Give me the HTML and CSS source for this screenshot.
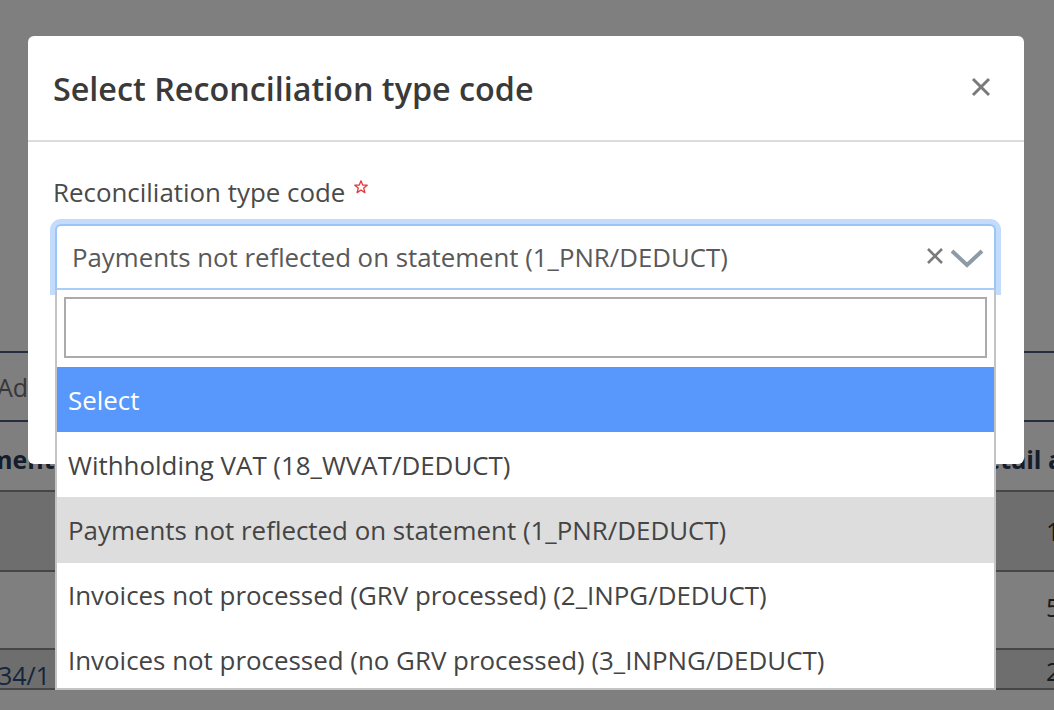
FILE: index.html
```html
<!DOCTYPE html>
<html lang="en">
<head>
<meta charset="utf-8">
<title>Select Reconciliation type code</title>
<link rel="stylesheet" href="styles.css">
</head>
<body>
<div class="page">
  <div class="tabs"><span class="tab">Add</span></div>
  <div class="grid">
    <div class="row head">
      <div class="cell c1">ment</div>
      <div class="cell c2"></div>
      <div class="cell c3">Detail amount</div>
    </div>
    <div class="row alt">
      <div class="cell c1"></div>
      <div class="cell c2"></div>
      <div class="cell c3 num">1,250.00</div>
    </div>
    <div class="row">
      <div class="cell c1"></div>
      <div class="cell c2"></div>
      <div class="cell c3 num">5,000.00</div>
    </div>
    <div class="row alt last">
      <div class="cell c1 link">34/1</div>
      <div class="cell c2"></div>
      <div class="cell c3 num">2,100.00</div>
    </div>
  </div>
</div>

<div class="backdrop"></div>

<div class="modal">
  <div class="modal-content">
    <div class="modal-header">
      <h5 class="modal-title">Select Reconciliation type code</h5>
      <button class="close" type="button" aria-label="Close">
        <svg width="20" height="20" viewBox="0 0 20 20"><path d="M2 2 L18 18 M18 2 L2 18" stroke="#7a7a7a" stroke-width="3" stroke-linecap="butt" fill="none"/></svg>
      </button>
    </div>
    <div class="modal-body">
      <label class="field-label">Reconciliation type code <svg class="req" width="14" height="14" viewBox="0 0 14 14"><polygon points="7,0.8 8.7,5 13.2,5.2 9.7,8 10.9,12.6 7,10 3.1,12.6 4.3,8 0.8,5.2 5.3,5" fill="none" stroke="#e5383b" stroke-width="1.3" stroke-linejoin="round"/></svg></label>
      <div class="select-wrap">
        <div class="select">
          <span class="select-text">Payments not reflected on statement (1_PNR/DEDUCT)</span>
          <span class="select-clear"><svg width="18" height="18" viewBox="0 0 18 18"><path d="M2 2 L16 16 M16 2 L2 16" stroke="#7b7b7b" stroke-width="2.6" fill="none"/></svg></span>
          <span class="select-arrow"><svg width="34" height="20" viewBox="0 0 34 20"><path d="M2 3 L17 17 L32 3" stroke="#8e9ba6" stroke-width="4" fill="none" stroke-linejoin="miter"/></svg></span>
        </div>
        <div class="dropdown">
          <div class="search"><input class="search-input" type="text" aria-label="Search"></div>
          <ul class="options">
            <li class="option highlighted">Select</li>
            <li class="option">Withholding VAT (18_WVAT/DEDUCT)</li>
            <li class="option selected">Payments not reflected on statement (1_PNR/DEDUCT)</li>
            <li class="option">Invoices not processed (GRV processed) (2_INPG/DEDUCT)</li>
            <li class="option">Invoices not processed (no GRV processed) (3_INPNG/DEDUCT)</li>
          </ul>
        </div>
      </div>
    </div>
  </div>
</div>
</body>
</html>
```

FILE: styles.css
```css
* { box-sizing: border-box; }

html, body {
  margin: 0;
  padding: 0;
  width: 1054px;
  height: 710px;
  overflow: hidden;
  background: #ffffff;
  font-family: "Open Sans", "Noto Sans", "Liberation Sans", sans-serif;
}

/* ---------- page behind the backdrop ---------- */
.page {
  padding-top: 351px;
  width: 1054px;
}

.tabs {
  height: 71px;
  border-top: 2px solid #4a5d7c;
  border-bottom: 2px solid #4a5d7c;
  display: flex;
  align-items: center;
  background: #ffffff;
}

.tab {
  font-size: 25px;
  color: #6e6e6e;
  text-indent: -3px;
  display: block;
}

.row {
  display: grid;
  grid-template-columns: 60px 1fr 87px;
  align-items: center;
  height: 70px;
  border-bottom: 2px solid #8c8c8c;
  background: #ffffff;
}

.row.head { height: 70px; padding-top: 6px; }
.row.alt { background: #dcdcdc; height: 80px; }
.row:nth-child(3) { height: 78px; padding-bottom: 6px; }
.row.last { height: 40px; align-items: end; }

.cell {
  font-size: 25px;
  white-space: nowrap;
  overflow: hidden;
  color: #2b3b5a;
}

.head .cell { font-weight: 700; }
.head .c1 { text-indent: -12px; }

.c3.num { padding-left: 79px; color: #333; }

.link { color: #2b4a7a; text-indent: -2px; line-height: 26px; }

/* ---------- backdrop ---------- */
.backdrop {
  position: fixed;
  inset: 0;
  background: rgba(0, 0, 0, 0.5);
}

/* ---------- modal ---------- */
.modal {
  position: fixed;
  inset: 0;
  padding: 36px 0 0 28px;
}

.modal-content {
  width: 996px;
  height: 428px;
  background: #ffffff;
  border-radius: 6px;
}

.modal-header {
  display: flex;
  align-items: center;
  justify-content: space-between;
  padding: 29px 33px 28px 25px;
  border-bottom: 2px solid #dcdcdc;
}

.modal-title {
  margin: 0;
  font-size: 32.3px;
  line-height: 47px;
  font-weight: 600;
  color: #3a3a3a;
}

.close {
  border: 0;
  background: none;
  padding: 0;
  width: 20px;
  height: 20px;
  display: flex;
  margin-top: -3px;
}

.modal-body {
  padding: 31px 28px 0 27px;
}

.field-label {
  display: flex;
  align-items: flex-start;
  gap: 9px;
  font-size: 25.9px;
  line-height: 38px;
  color: #4a4a4a;
  margin: 0 0 13px -2px;
}

.req { margin-top: 7px; }

.select-wrap { position: relative; }

.select {
  height: 66px;
  border: 2px solid #9cc5f7;
  border-bottom-color: #a8cdf8;
  border-radius: 6px 6px 0 0;
  box-shadow: 0 0 0 5px #c3dcfb;
  display: flex;
  align-items: center;
  padding: 0 10px 0 15px;
  background: #fff;
}

.select-text {
  flex: 1;
  font-size: 25.8px;
  color: #595959;
  white-space: nowrap;
}

.select-clear { display: flex; margin-right: 6px; margin-top: -3px; }
.select-arrow { display: flex; margin-top: 1px; }

.dropdown {
  position: absolute;
  left: 0;
  right: 0;
  top: 66px;
  height: 400px;
  overflow: hidden;
  background: #fff;
  border: 2px solid #c4c4c4;
  border-top: 0;
}

.search {
  padding: 7px 7px 9px 7px;
}

.search-input {
  display: block;
  width: 100%;
  height: 61px;
  border: 2px solid #ababab;
  margin: 0;
  padding: 0 8px;
  font: inherit;
  outline: none;
}

.options {
  list-style: none;
  margin: 0;
  padding: 0;
}

.option {
  font-size: 25.9px;
  line-height: 38px;
  padding: 13.6px 11px;
  color: #444;
  white-space: nowrap;
}

.option.highlighted { background: #5897fb; color: #ffffff; }
.option.selected { background: #dddddd; }
```
